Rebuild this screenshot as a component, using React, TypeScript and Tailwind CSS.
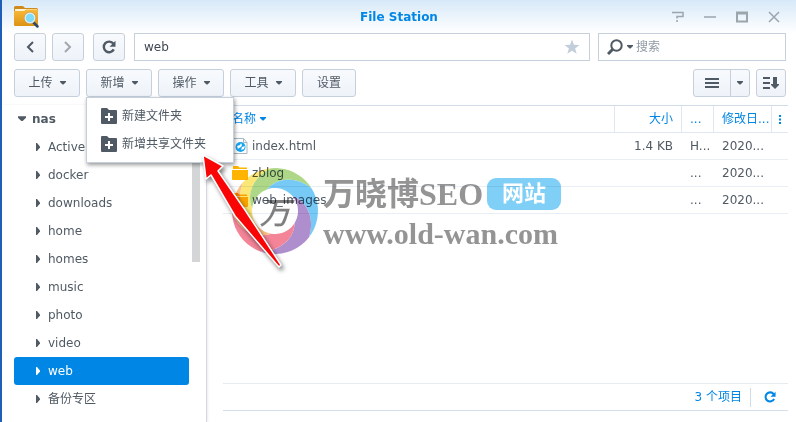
import { useState } from 'react';
import type { ReactNode } from 'react';
import clsx from 'clsx';

const FOLDERS = ['Active', 'docker', 'downloads', 'home', 'homes', 'music', 'photo', 'video', 'web', '备份专区'];

const FILES = [
  { name: 'index.html', kind: 'file', size: '1.4 KB', type: 'H...', date: '2020...' },
  { name: 'zblog', kind: 'folder', size: '', type: '...', date: '2020...' },
  { name: 'web_images', kind: 'folder', size: '', type: '...', date: '2020...' },
];

const TOOLBAR = [
  { label: '上传', menu: true },
  { label: '新增', menu: true },
  { label: '操作', menu: true },
  { label: '工具', menu: true },
  { label: '设置', menu: false },
];

const BUTTON = 'flex h-7 shrink-0 items-center justify-center border border-[#c6d0dc] bg-linear-to-b from-[#f8fafd] to-[#eef3f9] text-[#505a64]';

function Caret({ className }: { className?: string }) {
  return (
    <svg className={clsx('shrink-0', className)} width="6" height="4" viewBox="0 0 6 4" fill="currentColor" aria-hidden>
      <path d="M0 0h6v1L3.5 3.5h-1L0 1z" />
    </svg>
  );
}

function AppIcon() {
  return (
    <svg width="26" height="24" viewBox="0 0 26 24" aria-hidden>
      <defs>
        <linearGradient id="folder" x1="0" y1="0" x2="0" y2="1">
          <stop offset="0" stopColor="#f9b93a" />
          <stop offset="1" stopColor="#dc9415" />
        </linearGradient>
      </defs>
      <path d="M0 2.5Q0 1 1.5 1H9l2 2h11.500Q24 3 24 4.500V10H0z" fill="#d08a1c" />
      <path d="M1 4h22v4H1z" fill="#fff3d6" />
      <path d="M0 6h10l2-1.500h12V20q0 1-1 1H1q-1 0-1-1z" fill="url(#folder)" />
      <path d="M19 17l4.500 4.500" stroke="#2b4a68" strokeWidth="2.500" strokeLinecap="round" />
      <circle cx="16" cy="13" r="5" fill="#7fdcf8" stroke="#e4edf2" strokeWidth="1.500" />
      <circle cx="16" cy="13" r="5.800" fill="none" stroke="#a98545" strokeWidth="0.400" />
    </svg>
  );
}

function RefreshIcon({ size = 14 }: { size?: number }) {
  return (
    <svg width={size} height={size} viewBox="0 0 14 14" fill="none" aria-hidden>
      <path d="M11.800 9.400A5.300 5.300 0 1 1 11.300 3.600" stroke="currentColor" strokeWidth="2.400" />
      <path d="M13.500 0.800V6.800H7.500z" fill="currentColor" />
    </svg>
  );
}

function NewFolderIcon() {
  return (
    <svg width="16" height="16" viewBox="0 0 16 16" aria-hidden>
      <path d="M0 1q0-1 1-1h5l2 2h7q1 0 1 1v12q0 1-1 1H1q-1 0-1-1z" fill="#505a64" />
      <path d="M8 5v8M4 9h8" stroke="#fff" strokeWidth="2" />
    </svg>
  );
}

function FileIcon({ kind }: { kind: string }) {
  if (kind === 'folder') {
    return (
      <svg className="shrink-0" width="16" height="16" viewBox="0 0 16 16" fill="#ffb400" aria-hidden>
        <path d="M1 1h5l1.500 1.500H15V4H1zM0 5h16v9q0 1-1 1H1q-1 0-1-1z" />
      </svg>
    );
  }
  return (
    <svg className="shrink-0" width="16" height="16" viewBox="0 0 16 16" fill="none" aria-hidden>
      <path d="M1.500 0.500h10l3.500 4v11H1.500z" fill="#fff" stroke="#a9b7c1" />
      <path d="M11.500 0.500v4H15" stroke="#a9b7c1" />
      <circle cx="8.500" cy="9" r="5" fill="#15a4f0" />
      <path d="M5 8l3-1 1-2 1 2-1 2-2 1-1 1zM9 12l1-3 3-1-1 3z" fill="#fff" />
    </svg>
  );
}

const RING = [
  { color: '#f9dc3c', from: -138, to: -95 },
  { color: '#8cc855', from: -95, to: -32 },
  { color: '#3db4f2', from: -32, to: 38 },
  { color: '#8d5db8', from: 38, to: 110 },
  { color: '#f0506b', from: 110, to: 178 },
  { color: '#f9a552', from: 178, to: 222 },
];

// Colour blades of the ring: each side winds 78 degrees from the hole to the rim.
function bladePath(from: number, to: number) {
  const points: string[] = [];
  const add = (radius: number, degrees: number) => {
    const a = (degrees * Math.PI) / 180;
    points.push(`${(43 + radius * Math.cos(a)).toFixed(1)} ${(43 + radius * Math.sin(a)).toFixed(1)}`);
  };
  for (let i = 0; i <= 10; i++) add(23 + 2 * i, from - 78 + 7.8 * i);
  for (let i = 1; i <= 10; i++) add(43, from + ((to - from) * i) / 10);
  for (let i = 10; i >= 0; i--) add(23 + 2 * i, to - 78 + 7.8 * i);
  for (let i = 9; i > 0; i--) add(23, from - 78 + ((to - from) * i) / 10);
  return `M${points.join('L')}z`;
}

function Watermark() {
  return (
    <div className="pointer-events-none absolute top-[168px] left-[230px] z-10 flex items-center gap-[5px] opacity-70 mix-blend-multiply">
      <svg className="shrink-0" width="86" height="86" viewBox="0 0 86 86" aria-hidden>
        {RING.map((blade) => (
          <path key={blade.color} d={bladePath(blade.from, blade.to)} fill={blade.color} />
        ))}
        <text x="43" y="56" textAnchor="middle" fontSize="31" fontStyle="italic" fontWeight="500" fill="#4a4a4a" fontFamily="Noto Sans CJK SC, sans-serif">
          万
        </text>
      </svg>
      <div className="font-['Liberation_Serif','Noto_Sans_CJK_SC',serif] font-bold whitespace-nowrap text-[#666]">
        <div className="flex items-center gap-1 pt-[5px]">
          <span className="text-[32px] leading-10">万晓博SEO</span>
          <span className="flex h-8 items-center rounded-[9px] bg-[#48bbf2] px-[15px] text-[22px] text-white">网站</span>
        </div>
        <div className="text-[30px] leading-10">www.old-wan.com</div>
      </div>
    </div>
  );
}

function PointerArrow() {
  return (
    <svg className="pointer-events-none absolute top-[147px] left-[191px] z-30 drop-shadow-[2px_3px_2px_rgba(0,0,0,0.5)]" width="94" height="126" viewBox="0 0 94 126" aria-hidden>
      <path d="M10 8L30 19 25 24 52 63 88 118 86 120 42 69 18 28 13 32z" fill="#fa0505" stroke="#fff" strokeWidth="1.500" strokeLinejoin="round" />
    </svg>
  );
}

function WindowControl({ label, children }: { label: string; children: ReactNode }) {
  return (
    <button type="button" aria-label={label} className="text-[#9ba5ae]">
      <svg width="12" height="12" viewBox="0 0 12 12" fill="none" stroke="currentColor" strokeWidth="1.500">
        {children}
      </svg>
    </button>
  );
}

function TitleBar() {
  return (
    <header className="grid h-[33px] shrink-0 grid-cols-[1fr_auto_1fr] items-center bg-linear-to-b from-[#d7e9f8] to-white px-3">
      <AppIcon />
      <h1 className="text-xs font-bold text-[#0086e5]">File Station</h1>
      <div className="mr-1 flex justify-end gap-5">
        <WindowControl label="Help">
          <path d="M0 1.500h11v4H5v2M5 9v2" />
        </WindowControl>
        <WindowControl label="Minimize">
          <path d="M0 6h12" />
        </WindowControl>
        <WindowControl label="Maximize">
          <path d="M1 1.500h10v9H1zM0 2.500h12" strokeWidth="2" />
        </WindowControl>
        <WindowControl label="Close">
          <path d="M1 1l10 10M11 1L1 11" />
        </WindowControl>
      </div>
    </header>
  );
}

function NewMenu() {
  return (
    <div className="absolute top-full left-0 z-20 w-[148px] border border-[#c6d0dc] bg-white py-1 shadow-[1px_2px_4px_rgba(0,0,0,0.4)]" role="menu">
      {['新建文件夹', '新增共享文件夹'].map((label) => (
        <button key={label} type="button" role="menuitem" className="flex h-7 w-full items-center gap-[5px] pl-[14px] whitespace-nowrap">
          <NewFolderIcon />
          {label}
        </button>
      ))}
    </div>
  );
}

export default function App() {
  const [path, setPath] = useState('web');
  const [selected, setSelected] = useState('web');
  const [menuOpen, setMenuOpen] = useState(true);

  return (
    <div className="relative flex h-screen flex-col overflow-hidden border-l-2 border-[#1f5fb8] bg-white font-['DejaVu_Sans','Noto_Sans_CJK_SC',sans-serif] text-xs text-[#505a64]">
      <TitleBar />

      <div className="flex shrink-0 pr-[10px] pl-3">
        <button type="button" aria-label="Back" className={clsx(BUTTON, 'w-8 rounded-[3px]')}>
          <svg width="8" height="12" viewBox="0 0 8 12" fill="none" stroke="currentColor" strokeWidth="2">
            <path d="M7 1L2 6l5 5" />
          </svg>
        </button>
        <button type="button" aria-label="Forward" className={clsx(BUTTON, 'ml-[6px] w-8 rounded-[3px]')}>
          <svg className="opacity-50" width="8" height="12" viewBox="0 0 8 12" fill="none" stroke="currentColor" strokeWidth="2">
            <path d="M1 1l5 5-5 5" />
          </svg>
        </button>
        <button type="button" aria-label="Refresh" className={clsx(BUTTON, 'ml-[9px] w-8 rounded-[3px]')}>
          <RefreshIcon />
        </button>
        <div className="ml-[9px] flex h-7 min-w-0 flex-1 items-center border border-[#c6d0dc] pr-2 pl-[9px]">
          <input aria-label="Path" className="min-w-0 flex-1 text-[#3f4750] outline-none" value={path} onChange={(e) => setPath(e.target.value)} />
          <button type="button" aria-label="Add to favorites" className="text-[#c3cedb]">
            <svg width="18" height="16" viewBox="0 0 18 16" fill="currentColor">
              <path d="M9 0.500l1.900 5.200 5.600 0.200-4.400 3.500 1.600 5.400L9 11.700l-4.700 3.100 1.600-5.400L1.500 5.900l5.600-0.200z" />
            </svg>
          </button>
        </div>
        <div className="ml-2 flex h-7 w-[188px] items-center border border-[#c6d0dc] pl-2">
          <svg width="16" height="16" viewBox="0 0 16 16" fill="none" stroke="currentColor" aria-hidden>
            <circle cx="9.500" cy="6.500" r="5.200" strokeWidth="2" />
            <path d="M5.500 10.500L1 15" strokeWidth="3" />
          </svg>
          <Caret className="ml-1" />
          <input aria-label="搜索" placeholder="搜索" className="ml-[3px] min-w-0 flex-1 outline-none placeholder:text-[#919ba5]" />
        </div>
      </div>

      <div className="mt-2 flex shrink-0 gap-[6px] pr-[10px] pl-3">
        {TOOLBAR.map((item) => (
          <div key={item.label} className="relative">
            <button
              type="button"
              aria-haspopup={item.menu}
              onClick={() => item.label === '新增' && setMenuOpen((o) => !o)}
              className={clsx(BUTTON, 'gap-[7px] rounded-[3px]', item.menu ? 'w-[66px]' : 'w-[54px]')}
            >
              {item.label}
              {item.menu && <Caret />}
            </button>
            {item.label === '新增' && menuOpen && <NewMenu />}
          </div>
        ))}
        <div className="ml-auto flex">
          <button type="button" aria-label="List view" className={clsx(BUTTON, 'w-[38px] rounded-l-[3px]')}>
            <svg width="14" height="12" viewBox="0 0 14 12" stroke="currentColor" strokeWidth="2">
              <path d="M0 2h14M0 6h14M0 10h14" />
            </svg>
          </button>
          <button type="button" aria-label="View options" className={clsx(BUTTON, '-ml-px w-5 rounded-r-[3px]')}>
            <Caret />
          </button>
        </div>
        <button type="button" aria-label="Sort" className={clsx(BUTTON, 'w-[30px] rounded-[3px]')}>
          <svg width="16" height="14" viewBox="0 0 16 14" fill="currentColor">
            <path d="M0 1h7v2H0zM0 6h7v2H0zM0 11h7v2H0zM10 1h4v7h2v1l-4 4-4-4V8h2z" />
          </svg>
        </button>
      </div>

      <div className="mt-2 flex min-h-0 flex-1">
        <nav className="relative w-[205px] shrink-0 overflow-hidden border-r border-[#d4d8dc] pr-[17px] pl-3 shadow-[1px_0_2px_rgba(0,0,0,0.08)]" aria-label="Folders">
          <button type="button" className="flex h-7 items-center pl-1 font-bold">
            <Caret className="mr-[6px] h-[6px] w-2" />
            nas
          </button>
          <ul>
            {FOLDERS.map((name) => (
              <li key={name}>
                <button
                  type="button"
                  onClick={() => {
                    setSelected(name);
                    setPath(name);
                  }}
                  className={clsx('flex h-7 w-full items-center gap-2 rounded-[3px] pl-[22px]', selected === name && 'bg-[#0086e5] text-white')}
                >
                  <svg width="4" height="8" viewBox="0 0 4 8" fill="currentColor" aria-hidden>
                    <path d="M0 0h1l3 3.500v1L1 8H0z" />
                  </svg>
                  {name}
                </button>
              </li>
            ))}
          </ul>
          <div className="absolute top-0 right-[6px] h-[157px] w-2 bg-[#d3d5d7]" />
        </nav>

        <main className="flex min-w-0 flex-1 flex-col pr-2 pb-[11px] pl-4">
          <table className="w-full table-fixed border-separate border-spacing-0 border-t border-[#d0dce8] text-left whitespace-nowrap">
            <colgroup>
              <col />
              <col className="w-[67px]" />
              <col className="w-8" />
              <col className="w-[58px]" />
              <col className="w-[17px]" />
            </colgroup>
            <thead className="text-[#0086e5]">
              <tr className="*:h-[27px] *:border-b *:border-[#dfe8f1] *:p-0 *:font-normal">
                <th>
                  <span className="flex items-center gap-1 pl-[9px]">
                    名称
                    <Caret />
                  </span>
                </th>
                <th className="border-l">
                  <span className="block pr-2 text-right">大小</span>
                </th>
                <th className="border-l">
                  <span className="block pl-2">...</span>
                </th>
                <th className="border-l">
                  <span className="block pl-2">修改日...</span>
                </th>
                <th className="border-l">
                  <button type="button" aria-label="Columns" className="flex w-full justify-center">
                    <svg width="2" height="9" viewBox="0 0 2 9" fill="currentColor">
                      <path d="M0 0h2v2H0zM0 3.500h2v2H0zM0 7h2v2H0z" />
                    </svg>
                  </button>
                </th>
              </tr>
            </thead>
            <tbody>
              {FILES.map((file) => (
                <tr key={file.name} className="*:h-[27px] *:border-b *:border-[#e8eef3] *:p-0">
                  <td>
                    <span className="flex items-center gap-1 pl-[9px]">
                      <FileIcon kind={file.kind} />
                      {file.name}
                    </span>
                  </td>
                  <td>
                    <span className="block pr-2 text-right">{file.size}</span>
                  </td>
                  <td>
                    <span className="block pl-[9px]">{file.type}</span>
                  </td>
                  <td>
                    <span className="block pl-[9px]">{file.date}</span>
                  </td>
                  <td />
                </tr>
              ))}
            </tbody>
          </table>

          <footer className="mt-auto flex h-7 items-center justify-end border-t border-b border-t-[#e8ebee] border-b-[#d3dfea] pr-3 text-[#0086e5]">
            3 个项目
            <span className="mr-[13px] ml-2 h-[19px] w-px bg-[#d0dce8]" />
            <button type="button" aria-label="Reload">
              <RefreshIcon size={12} />
            </button>
          </footer>
        </main>
      </div>

      <Watermark />
      <PointerArrow />
    </div>
  );
}
